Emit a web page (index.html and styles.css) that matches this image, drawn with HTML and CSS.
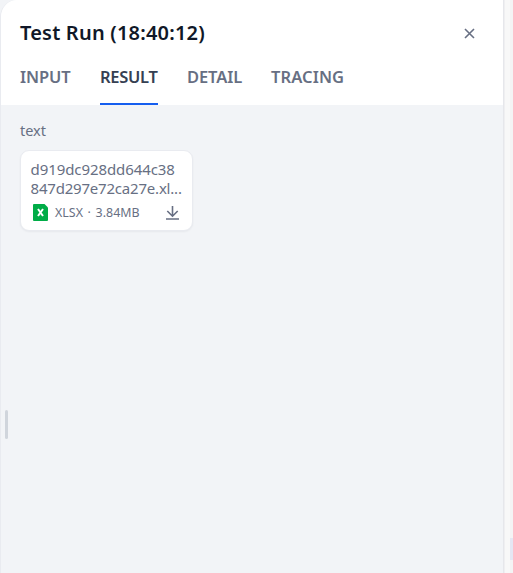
FILE: index.html
```
<!DOCTYPE html>
<html lang="en">
<head>
<meta charset="utf-8">
<title>Test Run</title>
<link rel="stylesheet" href="styles.css">
</head>
<body>
<div class="workspace">
  <main class="panel">
    <header class="header">
      <div class="title-row">
        <h1 class="title">Test Run (18:40:12)</h1>
        <button class="close" aria-label="Close">
          <svg width="11" height="11" viewBox="0 0 11 11"><path d="M1 1l9 9M10 1l-9 9"/></svg>
        </button>
      </div>
      <nav class="tabs">
        <a class="tab input">INPUT</a>
        <a class="tab result active">RESULT</a>
        <a class="tab detail">DETAIL</a>
        <a class="tab tracing">TRACING</a>
      </nav>
    </header>
    <section class="content">
      <div class="label">text</div>
      <article class="file">
        <div class="name"><div class="line first">d919dc928dd644c38</div><div class="line second">847d297e72ca27e.xl...</div></div>
        <div class="meta">
          <svg class="sheet" width="15" height="17" viewBox="0 0 15 17"><path fill="#00ac47" d="M1 0H11.500L15 3.500V16Q15 17 14 17H1Q0 17 0 16V1Q0 0 1 0Z"/><path stroke="#fff" stroke-width="2" d="M5 5L10 12M10 5L5 12"/></svg>
          <span class="info">XLSX · 3.84MB</span>
          <svg class="download" width="13" height="14" viewBox="0 0 13 14"><path d="M6.500 0V10M1.300 5L6.500 10.200L11.700 5M0 13H13"/></svg>
        </div>
      </article>
    </section>
    <div class="handle"></div>
  </main>
  <aside class="rail"><div class="rail-mark"></div></aside>
</div>
</body>
</html>
```
FILE: styles.css
```
* { box-sizing: border-box; }
body {
  margin: 0;
  background: #f2f4f7;
  color: #676f83;
  font-family: "Noto Sans", "Open Sans", sans-serif;
}
.workspace { display: flex; height: 573px; overflow: hidden; }
.panel {
  position: relative;
  width: 504px;
  background: #f2f4f7;
  border-left: 1px solid #e9ebf0;
  border-right: 1px solid #e6e7eb;
  border-top-left-radius: 17px;
  overflow: hidden;
}
.header { height: 105px; padding: 18px 0 0 19px; background: #fff; }
.title-row { display: flex; align-items: center; height: 30px; justify-content: space-between; padding-right: 28px; }
.title { margin: 0; color: #101828; font-size: 20px; line-height: 30px; font-weight: 600; letter-spacing: 0.2px; white-space: nowrap; }
.close { display: flex; padding: 0; border: 0; background: none; }
.close svg { fill: none; stroke: #676f83; stroke-width: 1.6; }
.tabs { display: flex; gap: 29px; height: 57px; font-size: 16.500px; line-height: 24px; font-weight: 650; }
.tab { padding-top: 17px; white-space: nowrap; letter-spacing: -0.1px; }
.input { width: 51px; }
.result { width: 58px; letter-spacing: -0.3px; }
.detail { width: 55px; }
.tracing { width: 74px; letter-spacing: 0.1px; }
.active { color: #354052; border-bottom: 2px solid #155eef; }
.content { padding: 15px 19px; }
.label { height: 20px; font-size: 14.500px; line-height: 20px; }
.file {
  width: 173px;
  height: 81px;
  margin-top: 10px;
  padding: 9px 9.500px 0;
  background: #fff;
  border: 1px solid #e9ebf0;
  border-radius: 9px;
  box-shadow: 0 1px 2px rgba(16, 24, 40, .05);
}
.name { height: 38px; font-size: 15px; line-height: 19px; }
.line { height: 19px; white-space: nowrap; }
.first { letter-spacing: -0.08px; }
.second { letter-spacing: -0.2px; }
.meta { display: flex; align-items: center; height: 26px; padding: 3px 3.500px 0 2.500px; }
.sheet, .download { fill: none; flex: none; }
.info { margin-left: 7px; font-size: 12.400px; line-height: 18px; letter-spacing: 0.05px; word-spacing: 1.3px; white-space: nowrap; }
.download { margin-left: auto; stroke: #676f83; stroke-width: 1.6; }
.handle { position: absolute; left: 4px; top: 410px; width: 3px; height: 29px; border-radius: 2px; background: #d0d5dc; }
.rail { display: flex; flex: 1; align-items: flex-end; justify-content: flex-end; padding-bottom: 13px; background: linear-gradient(90deg, #efeff1 0 1px, #f8f8f8 1px 6px, #f4f4f5 6px); }
.rail-mark { width: 3px; height: 22px; background: #e5e7f3; }
```
